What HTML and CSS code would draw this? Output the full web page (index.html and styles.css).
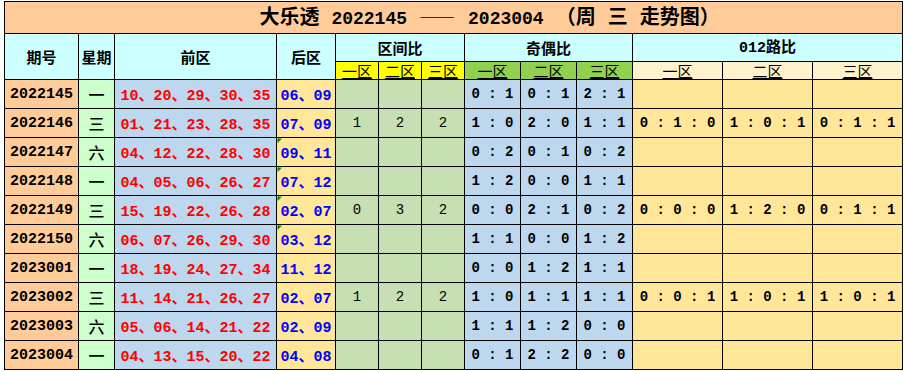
FILE: index.html
```html
<!DOCTYPE html>
<html lang="zh">
<head>
<meta charset="utf-8">
<title>大乐透 走势图</title>
<link rel="stylesheet" href="styles.css">
</head>
<body>
<table class="chart">
  <colgroup>
    <col class="c-id"><col class="c-wk"><col class="c-front"><col class="c-back">
    <col class="c-q"><col class="c-q"><col class="c-q">
    <col class="c-o"><col class="c-o"><col class="c-o">
    <col class="c-r"><col class="c-r"><col class="c-r">
  </colgroup>
  <tr class="r-title">
    <td colspan="13" class="title">大乐透 <span class="tn">2022145</span> <span class="dash">——</span> <span class="tn">2023004</span> （周 三 走势图）</td>
  </tr>
  <tr class="r-h1">
    <th rowspan="2" class="hd">期号</th>
    <th rowspan="2" class="hd">星期</th>
    <th rowspan="2" class="hd">前区</th>
    <th rowspan="2" class="hd">后区</th>
    <th colspan="3" class="hd">区间比</th>
    <th colspan="3" class="hd">奇偶比</th>
    <th colspan="3" class="hd"><span class="mono">012</span>路比</th>
  </tr>
  <tr class="r-h2">
    <th class="sub s-q">一区</th><th class="sub s-q">二区</th><th class="sub s-q">三区</th>
    <th class="sub s-o">一区</th><th class="sub s-o">二区</th><th class="sub s-o">三区</th>
    <th class="sub s-r">一区</th><th class="sub s-r">二区</th><th class="sub s-r">三区</th>
  </tr>
  <tr>
    <td class="id">2022145</td><td class="wk">一</td>
    <td class="front">10、20、29、30、35</td><td class="back">06、09</td>
    <td class="q"></td><td class="q"></td><td class="q"></td>
    <td class="o">0 : 1</td><td class="o">0 : 1</td><td class="o">2 : 1</td>
    <td class="r"></td><td class="r"></td><td class="r"></td>
  </tr>
  <tr>
    <td class="id">2022146</td><td class="wk">三</td>
    <td class="front">01、21、23、28、35</td><td class="back">07、09</td>
    <td class="q">1</td><td class="q">2</td><td class="q">2</td>
    <td class="o">1 : 0</td><td class="o">2 : 0</td><td class="o">1 : 1</td>
    <td class="r">0 : 1 : 0</td><td class="r">1 : 0 : 1</td><td class="r">0 : 1 : 1</td>
  </tr>
  <tr>
    <td class="id">2022147</td><td class="wk">六</td>
    <td class="front">04、12、22、28、30</td><td class="back flag">09、11</td>
    <td class="q"></td><td class="q"></td><td class="q"></td>
    <td class="o">0 : 2</td><td class="o">0 : 1</td><td class="o">0 : 2</td>
    <td class="r"></td><td class="r"></td><td class="r"></td>
  </tr>
  <tr>
    <td class="id">2022148</td><td class="wk">一</td>
    <td class="front">04、05、06、26、27</td><td class="back flag">07、12</td>
    <td class="q"></td><td class="q"></td><td class="q"></td>
    <td class="o">1 : 2</td><td class="o">0 : 0</td><td class="o">1 : 1</td>
    <td class="r"></td><td class="r"></td><td class="r"></td>
  </tr>
  <tr>
    <td class="id">2022149</td><td class="wk">三</td>
    <td class="front">15、19、22、26、28</td><td class="back flag">02、07</td>
    <td class="q">0</td><td class="q">3</td><td class="q">2</td>
    <td class="o">0 : 0</td><td class="o">2 : 1</td><td class="o">0 : 2</td>
    <td class="r">0 : 0 : 0</td><td class="r">1 : 2 : 0</td><td class="r">0 : 1 : 1</td>
  </tr>
  <tr>
    <td class="id">2022150</td><td class="wk">六</td>
    <td class="front">06、07、26、29、30</td><td class="back flag">03、12</td>
    <td class="q"></td><td class="q"></td><td class="q"></td>
    <td class="o">1 : 1</td><td class="o">0 : 0</td><td class="o">1 : 2</td>
    <td class="r"></td><td class="r"></td><td class="r"></td>
  </tr>
  <tr>
    <td class="id">2023001</td><td class="wk">一</td>
    <td class="front">18、19、24、27、34</td><td class="back">11、12</td>
    <td class="q"></td><td class="q"></td><td class="q"></td>
    <td class="o">0 : 0</td><td class="o">1 : 2</td><td class="o">1 : 1</td>
    <td class="r"></td><td class="r"></td><td class="r"></td>
  </tr>
  <tr>
    <td class="id">2023002</td><td class="wk">三</td>
    <td class="front">11、14、21、26、27</td><td class="back">02、07</td>
    <td class="q">1</td><td class="q">2</td><td class="q">2</td>
    <td class="o">1 : 0</td><td class="o">1 : 1</td><td class="o">1 : 1</td>
    <td class="r">0 : 0 : 1</td><td class="r">1 : 0 : 1</td><td class="r">1 : 0 : 1</td>
  </tr>
  <tr>
    <td class="id">2023003</td><td class="wk">六</td>
    <td class="front">05、06、14、21、22</td><td class="back">02、09</td>
    <td class="q"></td><td class="q"></td><td class="q"></td>
    <td class="o">1 : 1</td><td class="o">1 : 2</td><td class="o">0 : 0</td>
    <td class="r"></td><td class="r"></td><td class="r"></td>
  </tr>
  <tr>
    <td class="id">2023004</td><td class="wk">一</td>
    <td class="front">04、13、15、20、22</td><td class="back">04、08</td>
    <td class="q"></td><td class="q"></td><td class="q"></td>
    <td class="o">0 : 1</td><td class="o">2 : 2</td><td class="o">0 : 0</td>
    <td class="r"></td><td class="r"></td><td class="r"></td>
  </tr>
</table>
</body>
</html>
```

FILE: styles.css
```css
html, body {
  margin: 0;
  padding: 0;
  background: #ffffff;
}

.chart {
  margin: 1px 0 0 4px;
  border-collapse: collapse;
  table-layout: fixed;
  width: 898px;
  font-family: "Liberation Mono", "Noto Sans CJK SC", monospace;
  font-weight: bold;
  color: #000;
}

.c-id { width: 74px; }
.c-wk { width: 36px; }
.c-front { width: 162px; }
.c-back { width: 59px; }
.c-q { width: 43px; }
.c-o { width: 56px; }
.c-r { width: 90px; }

.chart td, .chart th {
  border: 1px solid #000;
  padding: 0;
  text-align: center;
  vertical-align: middle;
  white-space: nowrap;
  overflow: hidden;
}

.chart tr { height: 29px; }
.chart tr.r-title { height: 32px; }
.chart tr.r-h1 { height: 28px; }
.chart tr.r-h2 { height: 18px; }

.title {
  background: #FFCC99;
  font-family: "Liberation Mono", "Noto Sans CJK SC", monospace;
  font-size: 20px;
  font-weight: bold;
  padding-left: 72px !important;
  line-height: 24px;
}
.title .tn {
  font-size: 18px;
}
.title .dash {
  font-family: "Noto Sans CJK SC", sans-serif;
  font-size: 18px;
  letter-spacing: 1px;
}

.hd {
  background: #CCFFFF;
  font-family: "Noto Sans CJK SC", sans-serif;
  font-size: 15px;
  font-weight: bold;
  line-height: 18px;
}
.hd .mono {
  font-family: "Liberation Mono", monospace;
  font-size: 15px;
}

.chart th.sub {
  font-family: "Noto Sans CJK SC", sans-serif;
  font-size: 15px;
  font-weight: normal;
  text-decoration: underline;
  line-height: 15px;
  overflow: visible;
}
.s-q { background: #FFFF00; }
.s-o { background: #92D050; }
.s-r { background: #FFF2CC; }

.id {
  background: #FFCC99;
  font-size: 15px;
}
.wk {
  background: #CCFFCC;
  font-family: "Noto Sans CJK SC", sans-serif;
  font-size: 16px;
  font-weight: 500;
}
.front {
  background: #BDD7EE;
  color: #FF0000;
  font-size: 15px;
}
.back {
  background: #FFE699;
  color: #0000FF;
  font-size: 15px;
}
.back.flag {
  background: linear-gradient(135deg, #008000 0, #008000 3px, transparent 3px), #FFE699;
}
.q {
  background: #C6E0B4;
  font-size: 14px;
  font-weight: normal;
}
.o {
  background: #BDD7EE;
  font-size: 14px;
}
.r {
  background: #FFE699;
  font-size: 14px;
}
```
